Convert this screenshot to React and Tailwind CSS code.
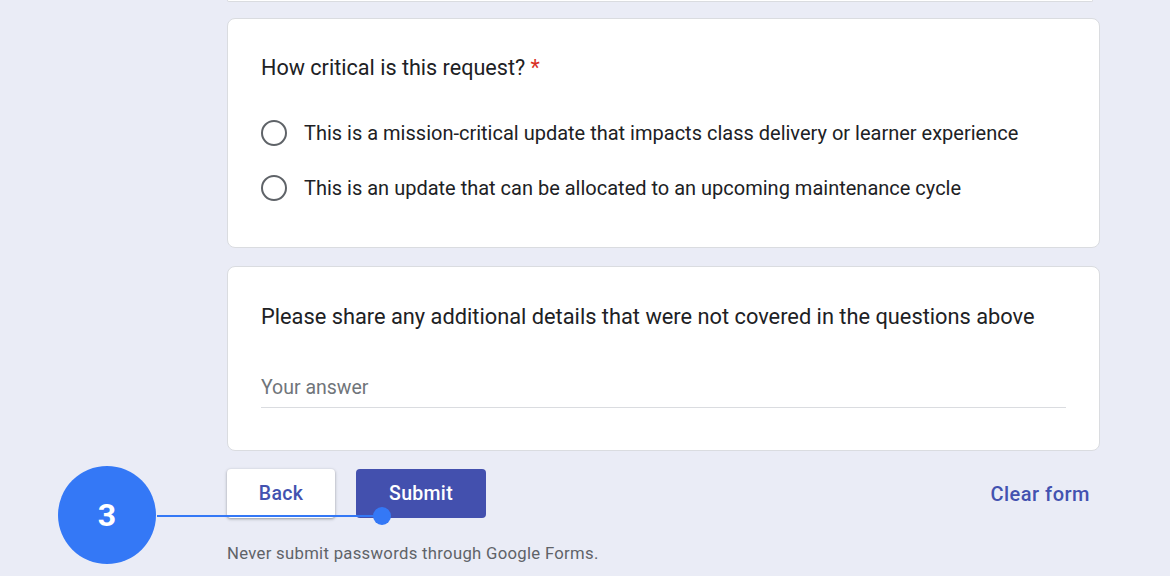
import React from "react";

const font = { fontFamily: "Roboto, 'Noto Sans', Arial, sans-serif" };

function Radio({ label }) {
    return (
        <label className="flex items-center h-[55px] cursor-pointer">
            <span className="w-[26px] h-[26px] rounded-full border-2 border-[#5f6368] shrink-0" />
            <span className="ml-[17px] text-[20px] text-[#202124]">{label}</span>
        </label>
    );
}

export default function App() {
    return (
        <div className="relative min-h-[576px] bg-[#eaecf6] overflow-hidden" style={font}>
            <div className="ml-[227px] w-[873px] flex flex-col">
                {/* previous card edge */}
                <div className="h-[2px] mr-[7px] bg-white border-b border-x border-[#dadce0] rounded-b-lg" />

                {/* Question card */}
                <div className="mt-[16px] bg-white border border-[#dadce0] rounded-lg px-[33px] pt-[35px] pb-[32px]">
                    <h2 className="text-[21.6px] leading-[28px] text-[#202124]">
                        How critical is this request? <span className="text-[#d93025]">*</span>
                    </h2>
                    <div className="mt-[23px] flex flex-col">
                        <Radio label="This is a mission-critical update that impacts class delivery or learner experience" />
                        <Radio label="This is an update that can be allocated to an upcoming maintenance cycle" />
                    </div>
                </div>

                {/* Details card */}
                <div className="mt-[18px] bg-white border border-[#dadce0] rounded-lg px-[33px] pt-[36px] pb-[42px]">
                    <h2 className="text-[21.8px] leading-[28px] text-[#202124]">
                        Please share any additional details that were not covered in the questions above
                    </h2>
                    <div className="mt-[45px] pb-[7px] border-b border-[#dadce0] text-[19.5px] leading-[24px] text-[#70757a]">
                        Your answer
                    </div>
                </div>

                {/* Actions */}
                <div className="mt-[18px] flex items-center">
                    <button className="w-[108px] h-[49px] bg-white rounded-[4px] shadow-[0_1px_2px_rgba(60,64,67,0.3),0_1px_3px_1px_rgba(60,64,67,0.15)] text-[19.5px] tracking-[0.3px] font-medium text-[#4352b0]">
                        Back
                    </button>
                    <button className="ml-[21px] w-[130px] h-[49px] bg-[#4350ae] rounded-[4px] text-[19.5px] tracking-[0.3px] font-medium text-white">
                        Submit
                    </button>
                    <button className="ml-auto mr-[10px] text-[20px] tracking-[0.5px] font-medium text-[#4352b0]">
                        Clear form
                    </button>
                </div>

                <p className="mt-[26px] text-[16.7px] tracking-[0.3px] leading-[20px] text-[#5f6368]">
                    Never submit passwords through Google Forms.
                </p>
            </div>

            {/* Annotation overlay */}
            <div className="absolute left-[157px] top-[515px] w-[225px] h-[2px] bg-[#3478f6]" />
            <div className="absolute left-[373px] top-[507px] w-[18px] h-[18px] rounded-full bg-[#3478f6]" />
            <div className="absolute left-[58px] top-[466px] w-[98px] h-[98px] rounded-full bg-[#3478f6] flex items-center justify-center text-white text-[32px] font-bold">
                3
            </div>
        </div>
    );
}
